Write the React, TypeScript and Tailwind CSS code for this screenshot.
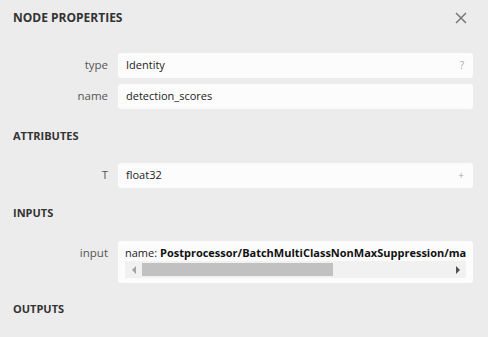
import React from 'react'

const font = { fontFamily: '"Open Sans", "Noto Sans", sans-serif' }

function Heading({ children, className = '' }: { children: React.ReactNode; className?: string }) {
  return (
    <div className={`pl-[13px] text-[11px] font-bold text-[#333] leading-[16px] ${className}`}>
      {children}
    </div>
  )
}

function Row({ label, children, className = '' }: { label: string; children: React.ReactNode; className?: string }) {
  return (
    <div className={`flex pr-[15px] ${className}`}>
      <div className="w-[108px] shrink-0 pt-[4px] text-right text-[11.5px] text-[#555] leading-[16px]">{label}</div>
      <div className="ml-[10px] flex-1 min-w-0">{children}</div>
    </div>
  )
}

function ValueBox({ value, suffix }: { value: string; suffix: string }) {
  return (
    <div className="flex h-[25px] items-center justify-between rounded-[3px] bg-[#fcfcfc] pl-[8px] pr-[9px]">
      <span className="text-[11px] text-[#222]">{value}</span>
      <span className="text-[10px] text-[#aaa]">{suffix}</span>
    </div>
  )
}

export default function App() {
  return (
    <div style={font} className="w-[488px] h-[337px] overflow-hidden bg-[#ececec]">
      <div className="flex h-[36px] items-center justify-between pl-[13px] pr-[20px]">
        <span className="text-[12px] font-bold text-[#333]">NODE PROPERTIES</span>
        <svg width="12" height="12" viewBox="0 0 12 12" className="mr-[1px]">
          <path d="M1 1 L11 11 M11 1 L1 11" stroke="#777" strokeWidth="1.5" />
        </svg>
      </div>

      <Row label="type" className="mt-[17px]">
        <ValueBox value="Identity" suffix="?" />
      </Row>
      <Row label="name" className="mt-[6px]">
        <ValueBox value="detection_scores" suffix="" />
      </Row>

      <Heading className="mt-[19px]">ATTRIBUTES</Heading>

      <Row label="T" className="mt-[19px]">
        <ValueBox value="float32" suffix="+" />
      </Row>

      <Heading className="mt-[17px]">INPUTS</Heading>

      <Row label="input" className="mt-[20px]">
        <div className="rounded-[3px] bg-[#fcfcfc] px-[7px] pt-[4px] pb-[5px]">
          <div className="overflow-hidden whitespace-nowrap text-[11px] leading-[16px] text-[#222]">
            name: <b className="font-bold text-[#111]">Postprocessor/BatchMultiClassNonMaxSuppression/map/TensorArrayStack/TensorArrayGatherV3</b>
          </div>
          <div className="flex h-[17px] bg-[#f1f1f1]">
            <div className="flex w-[17px] items-center justify-center">
              <svg width="6" height="8" viewBox="0 0 6 8"><path d="M5 0 L1 4 L5 8 Z" fill="#a3a3a3" /></svg>
            </div>
            <div className="flex-1 flex items-center">
              <div className="h-[13px] w-[191px] bg-[#c1c1c1]" />
            </div>
            <div className="flex w-[17px] items-center justify-center">
              <svg width="6" height="8" viewBox="0 0 6 8"><path d="M1 0 L5 4 L1 8 Z" fill="#505050" /></svg>
            </div>
          </div>
        </div>
      </Row>

      <Heading className="mt-[18px]">OUTPUTS</Heading>
    </div>
  )
}
